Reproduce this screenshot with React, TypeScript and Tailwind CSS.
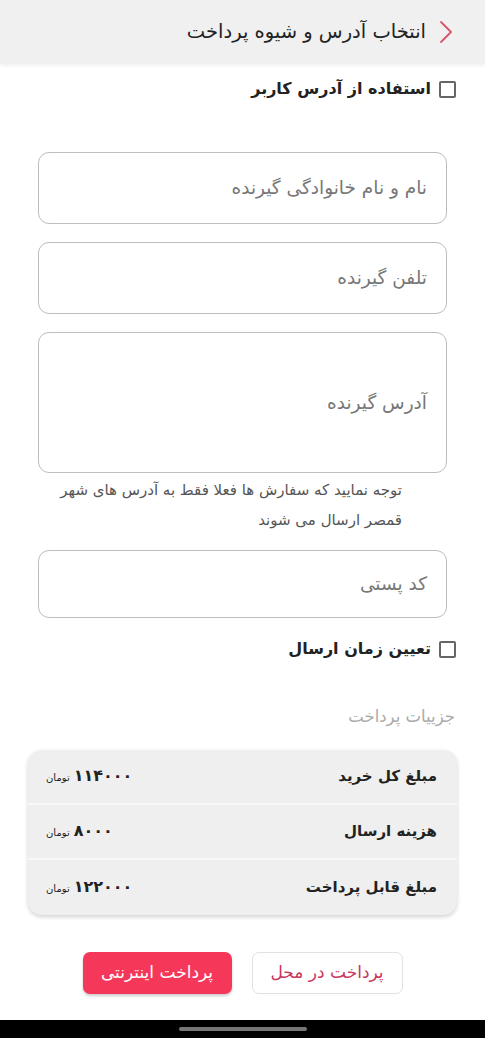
import React from 'react';

const font = { fontFamily: '"DejaVu Sans", "Noto Sans", sans-serif' };

function Box({ label }: { label: string }) {
  return (
    <label className="flex items-center gap-[8px] text-[16px] font-bold text-[#222] cursor-pointer">
      <span className="w-[17px] h-[17px] border-[2px] border-[#666] rounded-[2px] bg-white shrink-0" />
      {label}
    </label>
  );
}

function Field({ placeholder, h }: { placeholder: string; h: string }) {
  return (
    <div className={'border border-[#bdbdbd] rounded-[11px] flex items-center px-[19px] ' + h}>
      <span className="text-[18.5px] text-[#777]">{placeholder}</span>
    </div>
  );
}

function Row({ title, amount, last }: { title: string; amount: string; last?: boolean }) {
  return (
    <div
      className={
        'flex items-center justify-between h-[55px] pr-[20px] pl-[18px] ' +
        (last ? '' : 'border-b-[2px] border-[#f8f8f8]')
      }
    >
      <span className="text-[15px] font-bold text-[#222]">{title}</span>
      <span className="flex items-baseline gap-[4px] text-[#222]">
        <span className="text-[16px] font-bold tracking-[0.5px]">{amount}</span>
        <span className="text-[10px]">تومان</span>
      </span>
    </div>
  );
}

export default function App() {
  return (
    <div dir="rtl" style={font} className="w-[485px] h-[1038px] bg-white flex flex-col overflow-hidden">
      <header className="h-[64px] bg-[#f0f0f0] shadow-[0_2px_3px_rgba(0,0,0,0.06)] flex items-center pr-[32px] gap-[13px] shrink-0">
        <svg width="14" height="24" viewBox="0 0 14 24" fill="none">
          <path d="M2 2 L12 12 L2 22" stroke="#d9546f" strokeWidth="1.8" strokeLinecap="round" strokeLinejoin="round" />
        </svg>
        <h1 className="text-[19.5px] text-[#222]">انتخاب آدرس و شیوه پرداخت</h1>
      </header>

      <div className="pr-[29px] pt-[13px]">
        <Box label="استفاده از آدرس کاربر" />
      </div>

      <div className="px-[38px] pt-[51px] flex flex-col gap-[18px]">
        <Field placeholder="نام و نام خانوادگی گیرنده" h="h-[72px]" />
        <Field placeholder="تلفن گیرنده" h="h-[72px]" />
        <div>
          <Field placeholder="آدرس گیرنده" h="h-[141px]" />
          <p className="text-[15px] text-[#555] leading-[30px] pr-[45px] pt-[2px]">
            توجه نمایید که سفارش ها فعلا فقط به آدرس های شهر
            <br />
            قمصر ارسال می شوند
          </p>
        </div>
        <div className="-mt-[3px]">
          <Field placeholder="کد پستی" h="h-[68px]" />
        </div>
      </div>

      <div className="pr-[29px] pt-[19px]">
        <Box label="تعیین زمان ارسال" />
      </div>

      <div className="pr-[30px] pt-[44px] text-[16.5px] text-[#aaa]">جزییات پرداخت</div>

      <div className="mx-[28px] mt-[20px] bg-[#efefef] rounded-[14px] shadow-[0_2px_4px_rgba(0,0,0,0.18)]">
        <Row title="مبلغ کل خرید" amount="۱۱۴۰۰۰" />
        <Row title="هزینه ارسال" amount="۸۰۰۰" />
        <Row title="مبلغ قابل پرداخت" amount="۱۲۲۰۰۰" last />
      </div>

      <div className="flex justify-center gap-[20px] mt-[37px]">
        <button className="w-[151px] h-[42px] rounded-[7px] border border-[#e2e2e2] bg-white text-[#c9365c] text-[17px]">
          پرداخت در محل
        </button>
        <button className="w-[149px] h-[42px] rounded-[7px] bg-[#f5385a] text-white text-[17px] shadow-[0_2px_3px_rgba(0,0,0,0.2)]">
          پرداخت اینترنتی
        </button>
      </div>

      <div className="mt-auto h-[18px] bg-black flex items-center justify-center shrink-0">
        <div className="w-[128px] h-[4px] rounded-full bg-[#777]" />
      </div>
    </div>
  );
}
